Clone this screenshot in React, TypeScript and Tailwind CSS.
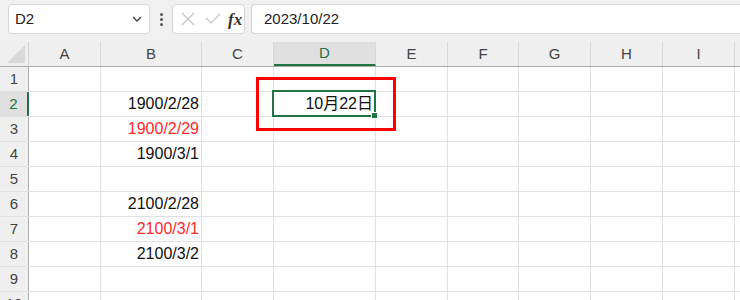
import React from 'react';

const cols = [
  { key: 'A', w: 'w-[72px]' },
  { key: 'B', w: 'w-[101px]' },
  { key: 'C', w: 'w-[72px]' },
  { key: 'D', w: 'w-[102px]' },
  { key: 'E', w: 'w-[72px]' },
  { key: 'F', w: 'w-[71px]' },
  { key: 'G', w: 'w-[72px]' },
  { key: 'H', w: 'w-[72px]' },
  { key: 'I', w: 'w-[72px]' },
  { key: '', w: 'w-[72px]' },
];

type Cell = { text: string; red?: boolean };

const data: Record<number, Record<string, Cell>> = {
  2: { B: { text: '1900/2/28' }, D: { text: '10月22日' } },
  3: { B: { text: '1900/2/29', red: true } },
  4: { B: { text: '1900/3/1' } },
  6: { B: { text: '2100/2/28' } },
  7: { B: { text: '2100/3/1', red: true } },
  8: { B: { text: '2100/3/2' } },
};

const rows = [1, 2, 3, 4, 5, 6, 7, 8, 9, 10];

const App: React.FC = () => {
  return (
    <div className="w-[740px] h-[300px] overflow-hidden bg-white font-['Liberation_Sans','Noto_Sans_CJK_JP',sans-serif] text-[#222]">
      {/* formula bar */}
      <div className="h-[42px] bg-[#f0f0f0] flex items-start pt-[4px] pl-[8px]">
        <div className="w-[142px] h-[30px] bg-white border border-[#d6d6d6] rounded-[4px] flex items-center justify-between pl-[6px] pr-[6px]">
          <span className="text-[15px] text-[#222]">D2</span>
          <svg width="12" height="8" viewBox="0 0 12 8">
            <path d="M2 2 L6 6 L10 2" fill="none" stroke="#444" strokeWidth="1.4" />
          </svg>
        </div>
        <div className="w-[22px] h-[30px] flex flex-col items-center justify-center gap-[2px]">
          <span className="w-[3px] h-[3px] rounded-full bg-[#555]" />
          <span className="w-[3px] h-[3px] rounded-full bg-[#555]" />
          <span className="w-[3px] h-[3px] rounded-full bg-[#555]" />
        </div>
        <div className="w-[73px] h-[30px] bg-white border border-[#d6d6d6] rounded-[4px] flex items-center pl-[8px] gap-[10px]">
          <svg width="14" height="14" viewBox="0 0 14 14">
            <path d="M1 1 L13 13 M13 1 L1 13" stroke="#c4c4c4" strokeWidth="1.2" fill="none" />
          </svg>
          <svg width="16" height="12" viewBox="0 0 16 12">
            <path d="M1 5 L6 10 L15 1" stroke="#c4c4c4" strokeWidth="1.2" fill="none" />
          </svg>
          <span className="font-['Liberation_Serif',serif] italic font-bold text-[17px] text-[#333] leading-none -ml-[3px]">fx</span>
        </div>
        <div className="ml-[6px] flex-1 h-[30px] bg-white border border-[#d6d6d6] border-r-0 rounded-l-[4px] flex items-center pl-[12px]">
          <span className="text-[15px] text-[#222]">2023/10/22</span>
        </div>
      </div>

      <div className="relative">
        {/* column headers */}
        <div className="flex h-[25px] bg-[#efefef] border-b border-[#ababab]">
          <div className="w-[29px] shrink-0 border-r border-[#d0d0d0] flex items-end justify-end pr-[3px] pb-[3px]">
            <svg width="18" height="18" viewBox="0 0 18 18">
              <path d="M18 0 L18 18 L0 18 Z" fill="#d8d8d8" />
            </svg>
          </div>
          {cols.map((c, i) => (
            <div
              key={i}
              className={`${c.w} shrink-0 border-r border-[#d8d8d8] flex items-center justify-center text-[15px] ${
                c.key === 'D' ? 'bg-[#e0e0e0] text-[#217346] border-b-2 border-b-[#217346]' : 'text-[#444]'
              }`}
            >
              {c.key}
            </div>
          ))}
        </div>

        {/* rows */}
        {rows.map((r) => (
          <div key={r} className="flex h-[25px] border-b border-[#e1e1e1]">
            <div
              className={`w-[29px] shrink-0 flex items-center justify-center text-[15px] ${
                r === 2
                  ? 'bg-[#e0e0e0] text-[#217346] border-r-2 border-[#217346]'
                  : 'bg-[#efefef] text-[#444] border-r border-[#ababab]'
              }`}
            >
              {r}
            </div>
            {cols.map((c, i) => {
              const cell = data[r]?.[c.key];
              return (
                <div
                  key={i}
                  className={`${c.w} shrink-0 border-r border-[#e1e1e1] flex items-center justify-end pr-[2px] text-[16px] ${
                    cell?.red ? 'text-[#ff2a2a]' : 'text-[#111]'
                  }`}
                >
                  {cell?.text}
                </div>
              );
            })}
          </div>
        ))}

        {/* selection on D2 */}
        <div className="absolute left-[272px] top-[48px] w-[104px] h-[27px] border-2 border-[#217346] pointer-events-none">
          <div className="absolute -right-[4px] -bottom-[4px] w-[7px] h-[7px] bg-[#217346] border border-white" />
        </div>

        {/* red annotation box */}
        <div className="absolute left-[256px] top-[35px] w-[140px] h-[54px] border-[3px] border-[#ff0000] pointer-events-none" />
      </div>
    </div>
  );
};

export default App;
